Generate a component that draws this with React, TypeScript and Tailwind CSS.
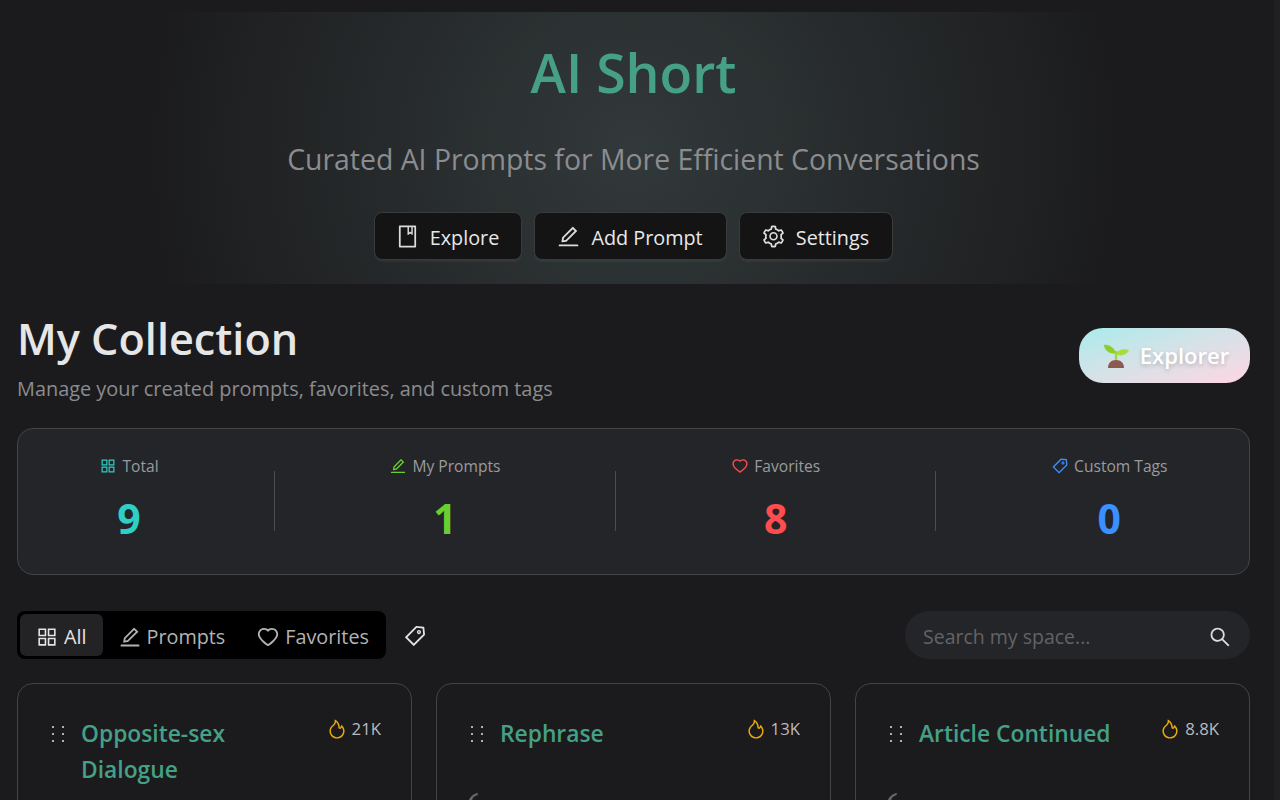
import React from "react";
import { AiOutlineAppstore, AiOutlineBook, AiOutlineEdit, AiOutlineFire, AiOutlineHeart, AiOutlineSearch, AiOutlineSetting, AiOutlineTag } from "react-icons/ai";

const font = { fontFamily: '"Open Sans", "Noto Sans", sans-serif' };

function HeroButton({ icon, label, w }: { icon: React.ReactNode; label: string; w: string }) {
  return (
    <button className={`flex h-[48px] items-center justify-center gap-[10px] rounded-lg border border-[#3a3b3d] bg-[#141414] pr-[2px] text-[19.8px] text-[#e8e8e8] shadow-[0_2px_0_rgba(255,255,255,0.04)] ${w}`}>
      <span className="text-[25px] text-[#dcdcdc]">{icon}</span>
      <span className="mt-[4px]">{label}</span>
    </button>
  );
}

function Stat({ icon, label, value, color }: { icon: React.ReactNode; label: string; value: string; color: string }) {
  return (
    <div className="flex flex-col items-center pb-[8px]">
      <div className="flex items-center gap-[5px] text-[15.6px] leading-[24px] text-[#9a9b9f]">
        <span className={`text-[18px] ${color}`}>{icon}</span>
        {label}
      </div>
      <div className={`mt-[16px] text-[41px] font-bold leading-[48px] ${color}`}>{value}</div>
    </div>
  );
}

function Divider() {
  return <div className="mb-[2px] h-[60px] w-px bg-[#4a4c50]" />;
}

function Drag() {
  return (
    <svg width="14" height="24" viewBox="0 0 14 24" className="mt-[5px] shrink-0 text-[#d4d4d4]" fill="currentColor">
      {[6, 13, 20].map((y) => (
        <g key={y}>
          <circle cx="2" cy={y} r="1.1" />
          <circle cx="12" cy={y} r="1.1" />
        </g>
      ))}
    </svg>
  );
}

function Card({ title, views, quoteClass }: { title: React.ReactNode; views: string; quoteClass: string }) {
  return (
    <div className="h-[200px] rounded-2xl border border-[#434447] bg-[#1b1b1d] pl-[33px] pr-[30px] pt-[32px]">
      <div className="flex items-start justify-between">
        <div className="flex items-start gap-[16px]">
          <Drag />
          <div className="text-[22.8px] font-semibold leading-[36px] text-[#45a085]">{title}</div>
        </div>
        <div className="mt-[1px] flex items-center gap-[4px] text-[16.8px] leading-[24px] text-[#b9babd]">
          <AiOutlineFire className="text-[22px] text-[#eaa90c]" />
          {views}
        </div>
      </div>
      <div className={`-ml-[8px] text-[64px] leading-[64px] text-[#66676b] [font-family:'Liberation_Serif',serif] ${quoteClass}`}>‘</div>
    </div>
  );
}

export default function App() {
  return (
    <div className="flex h-screen overflow-hidden bg-[#1b1b1d]" style={font}>
      <main className="min-w-0 flex-1 pl-[17px] pr-[24px]">
        <section className="mt-[12px] flex h-[272px] flex-col items-center bg-[radial-gradient(circle,#32393a_0%,#1b1b1d_78%)]">
          <h1 className="mt-[23px] text-[53.5px] font-semibold leading-[76px] text-[#45a085]">AI Short</h1>
          <p className="mt-[28px] text-[28.4px] leading-[40px] text-[#8b8c8f]">Curated AI Prompts for More Efficient Conversations</p>
          <div className="mt-[33px] flex gap-[12px]">
            <HeroButton icon={<AiOutlineBook />} label="Explore" w="w-[148px]" />
            <HeroButton icon={<AiOutlineEdit />} label="Add Prompt" w="w-[193px]" />
            <HeroButton icon={<AiOutlineSetting />} label="Settings" w="w-[154px]" />
          </div>
        </section>

        <section className="mt-[28px] flex items-start justify-between">
          <div>
            <h2 className="text-[43.2px] font-semibold leading-[54px] text-[#e6e6e6]">My Collection</h2>
            <p className="mt-[8px] text-[19.9px] leading-[30px] text-[#8b8c8f]">Manage your created prompts, favorites, and custom tags</p>
          </div>
          <button className="mt-[16px] flex h-[55px] w-[171px] items-center justify-center gap-[10px] rounded-[24px] bg-gradient-to-br from-[#a8ebeb] to-[#fed6e3] pl-[2px] text-[22px] font-semibold text-white [text-shadow:0_2px_4px_rgba(0,0,0,0.2)]">
            <svg width="28" height="28" viewBox="0 0 28 28">
              <path d="M14 9v10" stroke="#a5d63a" strokeWidth="2.4" />
              <path d="M14 11C12 5 6 2 2 3c0 5 6 10 12 8Z" fill="#8fce2a" />
              <path d="M14 12c1-4 8-6 13-4-2 5-9 7-13 4Z" fill="#a8dc3e" />
              <path d="M6 26c0-5 3-8 8-8s8 3 8 8Z" fill="#8c5a52" />
            </svg>
            Explorer
          </button>
        </section>

        <section className="mt-[24px] flex h-[147px] items-center justify-around rounded-2xl border border-[#434447] bg-[#242528] p-6">
          <Stat icon={<AiOutlineAppstore />} label="Total" value="9" color="text-[#2fcfc6]" />
          <Divider />
          <Stat icon={<AiOutlineEdit />} label="My Prompts" value="1" color="text-[#69cf2f]" />
          <Divider />
          <Stat icon={<AiOutlineHeart />} label="Favorites" value="8" color="text-[#ff4d4f]" />
          <Divider />
          <Stat icon={<AiOutlineTag />} label="Custom Tags" value="0" color="text-[#3b8fff]" />
        </section>

        <section className="mt-[36px] flex items-center justify-between">
          <div className="flex items-center gap-[17px]">
            <div className="flex h-[48px] items-center rounded-lg bg-black p-[3px] text-[19.8px] text-[#b3b3b3]">
              <div className="flex h-[42px] items-center gap-[5px] rounded-md bg-[#232325] pl-[15px] pr-[16px] pt-[3px] text-[#e4e4e4]">
                <AiOutlineAppstore className="text-[24px]" />All
              </div>
              <div className="flex h-[42px] items-center gap-[5px] px-[15px] pt-[3px]">
                <AiOutlineEdit className="text-[24px]" />Prompts
              </div>
              <div className="flex h-[42px] items-center gap-[5px] pl-[16px] pr-[14px] pt-[3px]">
                <AiOutlineHeart className="text-[24px]" />Favorites
              </div>
            </div>
            <AiOutlineTag className="mt-[2px] text-[24px] text-[#e4e4e4]" />
          </div>
          <div className="flex h-[48px] w-[345px] items-center justify-between rounded-full bg-[#242528] pl-[18px] pr-[18px] pt-[3px] text-[19.5px] text-[#626366]">
            Search my space...
            <AiOutlineSearch className="text-[24px] text-[#dcdcdc]" />
          </div>
        </section>

        <section className="mt-[24px] grid grid-cols-3 gap-[24px]">
          <Card title={<>Opposite-sex<br />Dialogue</>} views="21K" quoteClass="mt-[1px]" />
          <Card title="Rephrase" views="13K" quoteClass="mt-[30px]" />
          <Card title="Article Continued" views="8.8K" quoteClass="mt-[30px]" />
        </section>
      </main>
      <div className="w-[6px] shrink-0 bg-[#1f2022]" />
    </div>
  );
}
